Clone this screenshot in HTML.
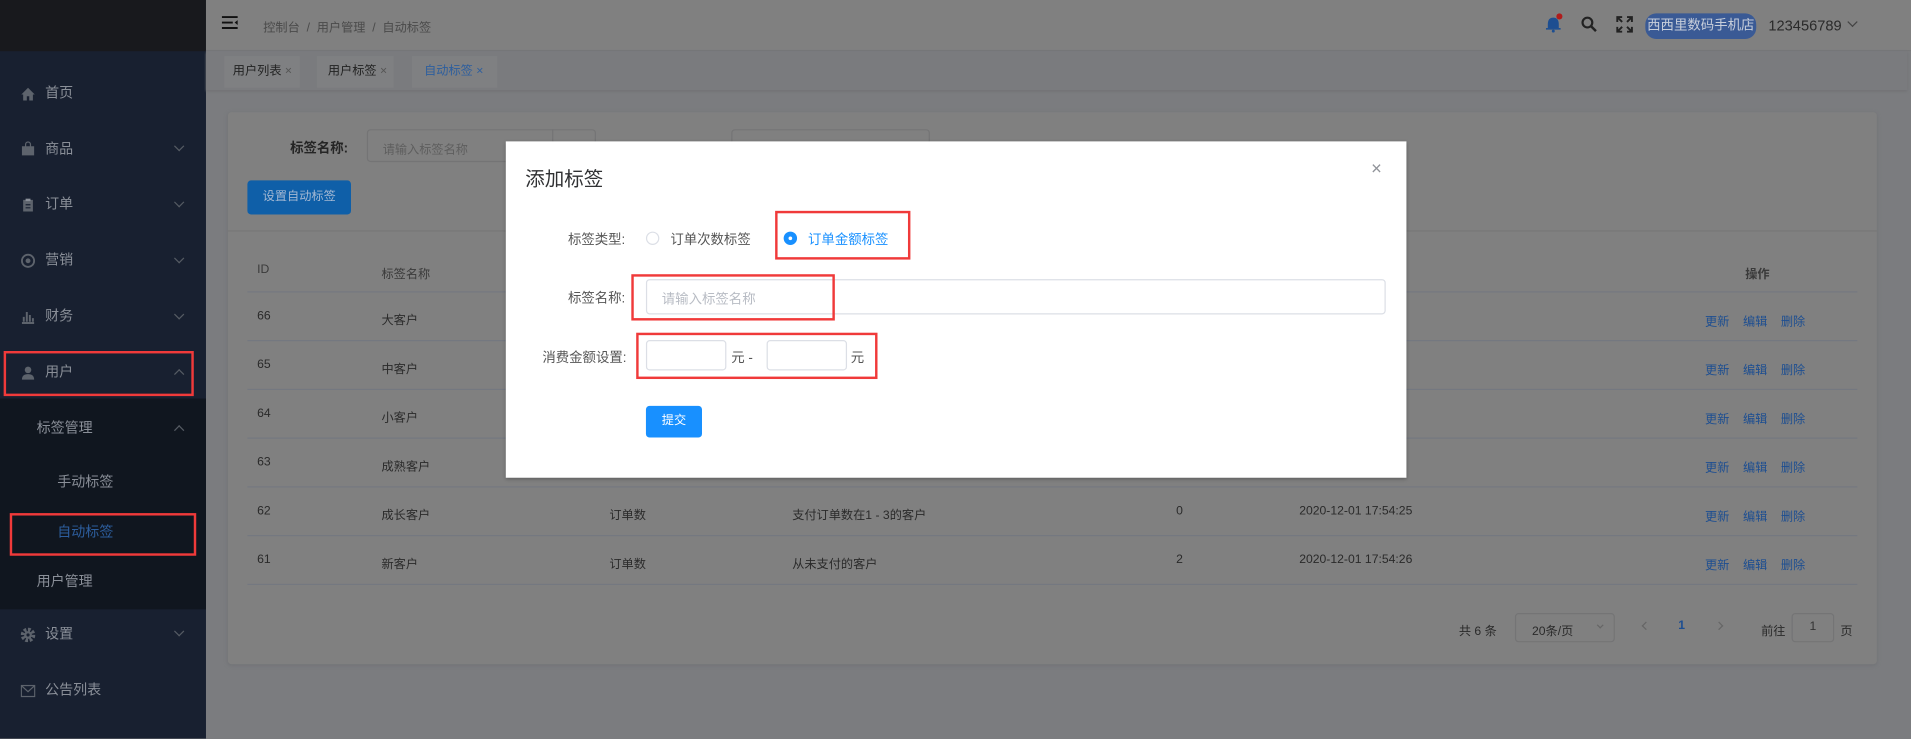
<!DOCTYPE html>
<html><head><meta charset="utf-8"><style>
*{box-sizing:border-box;margin:0;padding:0}
body{width:1911px;height:739px;overflow:hidden;background:#7b7c7f;font-family:"Liberation Sans","Noto Sans CJK SC",sans-serif}
#s{position:absolute;left:0;top:0;width:1568px;height:606px;transform:scale(1.21875);transform-origin:0 0;font-size:11px;color:#333}
.a{position:absolute}
.side{left:0;top:0;width:169px;height:606px;background:#182030}
.mi{position:absolute;left:37px;font-size:11.5px;color:#8a8f98;line-height:14px}
.ic{position:absolute;left:17px;width:12px;height:12px}
.ch{position:absolute;left:144px;width:6px;height:6px;border-right:1px solid #555b63;border-bottom:1px solid #555b63}
.dn{transform:rotate(45deg)}.up{transform:rotate(-135deg)}
.red{position:absolute;border:2px solid #f03a3a}
.td{position:absolute;font-size:10px;color:#2a2a2a}
.ln{position:absolute;left:203px;width:1321px;height:1px;background:#747880}
.op{position:absolute;font-size:10px;color:#1d4e91}
</style></head><body><div id="s">
<div class="a side"></div>
<div class="a" style="left:0;top:0;width:169px;height:42px;background:#18191d"></div>
<div class="a" style="left:0;top:327px;width:169px;height:173px;background:#10161f"></div>
<svg class="ic" style="top:71px" viewBox="0 0 12 12"><path d="M6 1L0.5 6.5H2V11.5H5V8H7V11.5H10V6.5H11.5Z" fill="#5d636c"/></svg><div class="mi" style="top:70px">首页</div>
<svg class="ic" style="top:116px" viewBox="0 0 12 12"><path d="M1 4H11V11.5H1Z" fill="#5d636c"/><path d="M4 5V2.5A2 2 0 0 1 8 2.5V5" stroke="#5d636c" fill="none"/></svg><div class="mi" style="top:116px">商品</div><div class="ch dn" style="top:117px"></div>
<svg class="ic" style="top:162px" viewBox="0 0 12 12"><path d="M2 2H10V11.5H2Z" fill="#5d636c"/><rect x="4" y="1" width="4" height="2" fill="#8a8f98"/><path d="M4 6H8M4 8.5H8" stroke="#182030"/></svg><div class="mi" style="top:161px">订单</div><div class="ch dn" style="top:163px"></div>
<svg class="ic" style="top:208px" viewBox="0 0 12 12"><circle cx="6" cy="6" r="5" stroke="#5d636c" stroke-width="1.5" fill="none"/><circle cx="6" cy="6" r="2" fill="#5d636c"/></svg><div class="mi" style="top:207px">营销</div><div class="ch dn" style="top:209px"></div>
<svg class="ic" style="top:254px" viewBox="0 0 12 12"><path d="M1 11H11M2.5 10V6M5 10V2M7.5 10V4.5M10 10V7" stroke="#5d636c" stroke-width="1.6"/></svg><div class="mi" style="top:253px">财务</div><div class="ch dn" style="top:255px"></div>
<svg class="ic" style="top:300px" viewBox="0 0 12 12"><circle cx="6" cy="3.5" r="2.7" fill="#5d636c"/><path d="M1 11.5Q1 7 6 7Q11 7 11 11.5Z" fill="#5d636c"/></svg><div class="mi" style="top:299px">用户</div><div class="ch up" style="top:304px"></div>
<div class="red" style="left:3px;top:288px;width:156px;height:37px"></div>
<div class="mi" style="left:30px;top:345px">标签管理</div><div class="ch up" style="top:350px"></div>
<div class="mi" style="left:47px;top:389px">手动标签</div>
<div class="mi" style="left:47px;top:430px;color:#2d5e9e">自动标签</div>
<div class="red" style="left:8px;top:421px;width:153px;height:35px"></div>
<div class="mi" style="left:30px;top:471px">用户管理</div>
<svg class="ic" style="top:515px" viewBox="0 0 12 12"><circle cx="6" cy="6" r="4.5" stroke="#5d636c" stroke-width="3" stroke-dasharray="2.2 1.3" fill="none"/><circle cx="6" cy="6" r="3.2" fill="#5d636c"/><circle cx="6" cy="6" r="1.3" fill="#182030"/></svg><div class="mi" style="top:514px">设置</div><div class="ch dn" style="top:515px"></div>
<svg class="ic" style="top:561px" viewBox="0 0 12 12"><rect x="0.5" y="1.5" width="11" height="9" stroke="#5d636c" fill="none"/><path d="M0.5 1.5L6 6.5L11.5 1.5" stroke="#5d636c" fill="none"/></svg><div class="mi" style="top:560px">公告列表</div>
<!-- header -->
<div class="a" style="left:169px;top:0;width:1399px;height:42px;background:#808080;border-bottom:1px solid #767779"></div>
<svg class="a" style="left:182px;top:13px" width="14" height="11" viewBox="0 0 14 11"><path d="M0 1H13M0 5.5H9M0 10H13" stroke="#111" stroke-width="1.6"/><path d="M13 3.5L10.5 5.5L13 7.5Z" fill="#111"/></svg>
<div class="a" style="left:216px;top:14px;font-size:10px;color:#4a4a4a">控制台 &nbsp;/&nbsp; 用户管理 &nbsp;/&nbsp; 自动标签</div>
<svg class="a" style="left:1268px;top:13px" width="13" height="14" viewBox="0 0 13 14"><path d="M6.5 1.5Q2 1.5 2 7V10H11V7Q11 1.5 6.5 1.5Z" fill="#1d4e91"/><rect x="0.5" y="10" width="12" height="1.3" fill="#1d4e91"/><circle cx="6.5" cy="12.5" r="1.2" fill="#1d4e91"/></svg>
<div class="a" style="left:1277px;top:11px;width:5px;height:5px;background:#b01c1c;border-radius:50%"></div>
<svg class="a" style="left:1297px;top:13px" width="14" height="14" viewBox="0 0 14 14"><circle cx="5.5" cy="5.5" r="4" stroke="#222" stroke-width="1.8" fill="none"/><path d="M8.5 8.5L12.5 12.5" stroke="#222" stroke-width="2"/></svg>
<svg class="a" style="left:1326px;top:13px" width="14" height="14" viewBox="0 0 14 14"><g stroke="#222" stroke-width="1.6" fill="none"><path d="M1 5V1H5M1 1L5 5"/><path d="M9 1H13V5M13 1L9 5"/><path d="M1 9V13H5M1 13L5 9"/><path d="M9 13H13V9M13 13L9 9"/></g></svg>
<div class="a" style="left:1350px;top:11px;width:91px;height:21px;background:#3a5a95;border-radius:9px;color:#c8cfdb;font-size:11px;text-align:center;line-height:21px">西西里数码手机店</div>
<div class="a" style="left:1451px;top:14px;font-size:12px;color:#2a2a2a">123456789</div>
<div class="a" style="left:1517px;top:15px;width:6px;height:6px;border-right:1px solid #444;border-bottom:1px solid #444;transform:rotate(45deg)"></div>
<!-- tabs -->
<div class="a" style="left:169px;top:42px;width:1396px;height:32px;background:#7a7b7e;box-shadow:0 1px 2px #6f7073"></div>
<div class="a" style="left:184px;top:46px;width:62px;height:26px;background:#7f8082;line-height:26px;padding-left:7px;font-size:10px;color:#222">用户列表 <span style="color:#555">×</span></div>
<div class="a" style="left:260px;top:46px;width:63px;height:26px;background:#7f8082;line-height:26px;padding-left:9px;font-size:10px;color:#222">用户标签 <span style="color:#555">×</span></div>
<div class="a" style="left:338px;top:46px;width:70px;height:26px;background:#7f8082;line-height:26px;padding-left:10px;font-size:10px;color:#2d5e9e">自动标签 ×</div>
<!-- card -->
<div class="a" style="left:187px;top:92px;width:1353px;height:453px;background:#808080;border-radius:3px;box-shadow:0 1px 3px #707275"></div>
<div class="a" style="left:238px;top:113px;font-size:11px;font-weight:bold;color:#252525">标签名称:</div>
<div class="a" style="left:301px;top:106px;width:188px;height:27px;border:1px solid #747475;border-radius:3px"></div>
<div class="a" style="left:453px;top:106px;width:1px;height:27px;background:#747475"></div>
<div class="a" style="left:314px;top:114px;font-size:10px;color:#5e5e5e">请输入标签名称</div>
<div class="a" style="left:600px;top:106px;width:163px;height:27px;border:1px solid #747475;border-radius:3px"></div>
<div class="a" style="left:203px;top:148px;width:85px;height:28px;background:#0f5fa8;border-radius:3px;color:#a4b8d3;font-size:10px;text-align:center;line-height:28px">设置自动标签</div>
<div class="a" style="left:187px;top:189px;width:1353px;height:1px;background:#777"></div>
<div class="td" style="left:211px;top:216px;color:#3a3a3a">ID</div>
<div class="td" style="left:313px;top:216px;color:#3a3a3a">标签名称</div>
<div class="td" style="left:1432px;top:216px;color:#3a3a3a;font-weight:bold">操作</div>
<div class="ln" style="top:239px"></div><div class="ln" style="top:279px"></div><div class="ln" style="top:319px"></div><div class="ln" style="top:359px"></div><div class="ln" style="top:399px"></div><div class="ln" style="top:439px"></div><div class="ln" style="top:479px"></div>
<div class="td" style="left:211px;top:254px">66</div><div class="td" style="left:313px;top:254px">大客户</div>
<div class="td" style="left:211px;top:294px">65</div><div class="td" style="left:313px;top:294px">中客户</div>
<div class="td" style="left:211px;top:334px">64</div><div class="td" style="left:313px;top:334px">小客户</div>
<div class="td" style="left:211px;top:374px">63</div><div class="td" style="left:313px;top:374px">成熟客户</div>
<div class="td" style="left:211px;top:414px">62</div><div class="td" style="left:313px;top:414px">成长客户</div><div class="td" style="left:500px;top:414px">订单数</div><div class="td" style="left:650px;top:414px">支付订单数在1 - 3的客户</div><div class="td" style="left:965px;top:414px">0</div><div class="td" style="left:1066px;top:414px">2020-12-01 17:54:25</div>
<div class="td" style="left:211px;top:454px">61</div><div class="td" style="left:313px;top:454px">新客户</div><div class="td" style="left:500px;top:454px">订单数</div><div class="td" style="left:650px;top:454px">从未支付的客户</div><div class="td" style="left:965px;top:454px">2</div><div class="td" style="left:1066px;top:454px">2020-12-01 17:54:26</div>
<div class="op" style="left:1399px;top:255px">更新 &nbsp;&nbsp; 编辑 &nbsp;&nbsp; 删除</div>
<div class="op" style="left:1399px;top:295px">更新 &nbsp;&nbsp; 编辑 &nbsp;&nbsp; 删除</div>
<div class="op" style="left:1399px;top:335px">更新 &nbsp;&nbsp; 编辑 &nbsp;&nbsp; 删除</div>
<div class="op" style="left:1399px;top:375px">更新 &nbsp;&nbsp; 编辑 &nbsp;&nbsp; 删除</div>
<div class="op" style="left:1399px;top:415px">更新 &nbsp;&nbsp; 编辑 &nbsp;&nbsp; 删除</div>
<div class="op" style="left:1399px;top:455px">更新 &nbsp;&nbsp; 编辑 &nbsp;&nbsp; 删除</div>
<!-- pagination -->
<div class="td" style="left:1197px;top:509px">共 6 条</div>
<div class="a" style="left:1243px;top:503px;width:82px;height:24px;border:1px solid #747475;border-radius:3px"></div>
<div class="td" style="left:1257px;top:509px">20条/页</div>
<div class="a" style="left:1311px;top:511px;width:4px;height:4px;border-right:1px solid #666;border-bottom:1px solid #666;transform:rotate(45deg)"></div>
<div class="a" style="left:1348px;top:511px;width:5px;height:5px;border-left:1px solid #666;border-bottom:1px solid #666;transform:rotate(45deg)"></div>
<div class="td" style="left:1377px;top:508px;color:#1d4e91;font-weight:bold">1</div>
<div class="a" style="left:1408px;top:511px;width:5px;height:5px;border-right:1px solid #666;border-top:1px solid #666;transform:rotate(45deg)"></div>
<div class="td" style="left:1445px;top:509px">前往</div>
<div class="a" style="left:1470px;top:503px;width:35px;height:24px;border:1px solid #747475;border-radius:3px;text-align:center;line-height:22px;font-size:10px">1</div>
<div class="td" style="left:1510px;top:509px">页</div>
<!-- dialog -->
<div class="a" style="left:415px;top:116px;width:739px;height:276px;background:#fff;box-shadow:0 1px 3px rgba(0,0,0,.3)"></div>
<div class="a" style="left:431px;top:133px;font-size:16px;color:#303133">添加标签</div>
<div class="a" style="left:1125px;top:130px;font-size:15px;color:#909399">×</div>
<div class="a" style="left:466px;top:188px;font-size:11px;color:#555">标签类型:</div>
<div class="a" style="left:530px;top:190px;width:11px;height:11px;border:1px solid #dcdfe6;border-radius:50%"></div>
<div class="a" style="left:550px;top:188px;font-size:11px;color:#555">订单次数标签</div>
<div class="a" style="left:643px;top:190px;width:11px;height:11px;background:#1890ff;border-radius:50%"></div>
<div class="a" style="left:647px;top:194px;width:3px;height:3px;background:#fff;border-radius:50%"></div>
<div class="a" style="left:663px;top:188px;font-size:11px;color:#1890ff">订单金额标签</div>
<div class="red" style="left:636px;top:173px;width:111px;height:40px"></div>
<div class="a" style="left:466px;top:236px;font-size:11px;color:#555">标签名称:</div>
<div class="a" style="left:530px;top:229px;width:607px;height:29px;border:1px solid #dcdfe6;border-radius:3px"></div>
<div class="a" style="left:543px;top:237px;font-size:11px;color:#b8bcc4">请输入标签名称</div>
<div class="red" style="left:518px;top:225px;width:167px;height:38px"></div>
<div class="a" style="left:445px;top:285px;font-size:11px;color:#555">消费金额设置:</div>
<div class="a" style="left:530px;top:279px;width:66px;height:25px;border:1px solid #dcdfe6;border-radius:3px"></div>
<div class="a" style="left:600px;top:285px;font-size:11px;color:#555">元 -</div>
<div class="a" style="left:629px;top:279px;width:66px;height:25px;border:1px solid #dcdfe6;border-radius:3px"></div>
<div class="a" style="left:698px;top:285px;font-size:11px;color:#555">元</div>
<div class="red" style="left:522px;top:273px;width:198px;height:38px"></div>
<div class="a" style="left:530px;top:333px;width:46px;height:26px;background:#1890ff;border-radius:3px;color:#fff;font-size:10px;text-align:center;line-height:26px">提交</div>
</div></body></html>
